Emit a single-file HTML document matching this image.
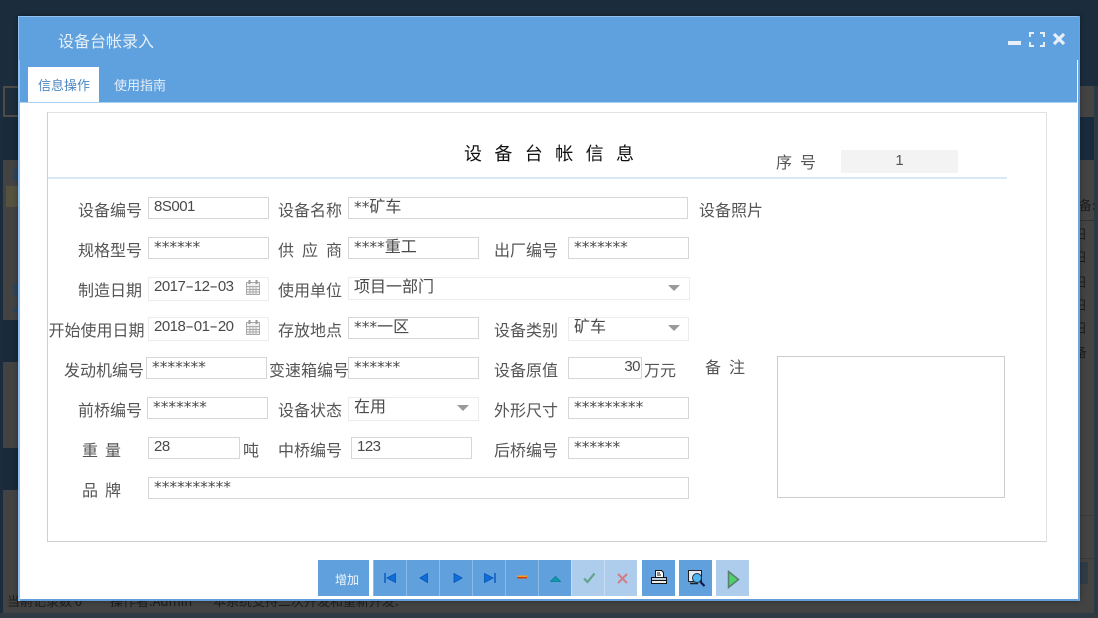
<!DOCTYPE html>
<html lang="zh"><head><meta charset="utf-8"><title>设备台帐录入</title>
<style>
html,body{margin:0;padding:0;width:1098px;height:618px;overflow:hidden;background:#434343}
body{position:relative;font-family:"Liberation Sans","WenQuanYi Zen Hei","Noto Sans CJK SC",sans-serif}
div,span{position:absolute;box-sizing:border-box}
svg{position:absolute;display:block}
.b{background:#1b2c3c}
.l{font:16px/20px "WenQuanYi Zen Hei","Noto Sans CJK SC",sans-serif;color:#555;white-space:nowrap;margin-top:-1px}
.j{text-align:justify;text-align-last:justify;white-space:normal}
.i{background:#fff;border:1px solid #d6d6d6;font:16px/14px "WenQuanYi Zen Hei","Noto Sans CJK SC",sans-serif;color:#4a4a4a;padding:0 0 0 5px;white-space:nowrap;overflow:hidden}
.s{border-color:#ececec}
.i b{font:400 15px/0 "Liberation Sans",sans-serif;letter-spacing:-.5px;position:relative;top:-1px}
.i b b{top:0}
.i b.h{display:inline-block;width:8.400px;text-align:center;transform:scaleX(1.700)}
.i em{font:400 15.400px/0 "DejaVu Sans",sans-serif;position:relative;top:-.5px}
.a{width:0;height:0;border-left:6px solid transparent;border-right:6px solid transparent;border-top:6px solid #9a9a9a}
.t{top:560px;height:36px;width:33px;background:#60a0dd;border-left:1px solid #8dbbe8}
.t.d{background:#aecdec;border-left-color:#c5dcf3}
.bg{color:#1d1d1d;font:13px/16px "WenQuanYi Zen Hei","Noto Sans CJK SC",sans-serif;white-space:nowrap}
</style></head><body>
<!-- backdrop -->
<div class="b" style="left:0;top:0;width:1098px;height:86px"></div>
<div class="b" style="left:0;top:86px;width:3px;height:532px"></div>
<div class="b" style="left:1094px;top:86px;width:4px;height:532px;background:#2b3945"></div>
<div class="b" style="left:3px;top:117px;width:1091px;height:43px;background:#182a3b"></div>
<div class="b" style="left:3px;top:320px;width:20px;height:42px;background:#182a3b"></div>
<div class="b" style="left:3px;top:448px;width:20px;height:42px;background:#182a3b"></div>
<div style="left:3px;top:86px;width:18px;height:31px;border:2px solid #4d4b46;background:#1e2d3b"></div>
<div style="left:6px;top:186px;width:14px;height:21px;background:#565240"></div>
<div style="left:13px;top:169px;width:8px;height:12px;background:#2c4560"></div>
<div style="left:13px;top:284px;width:8px;height:12px;background:#2c4560"></div>
<div style="left:13px;top:307px;width:8px;height:5px;background:#2c4560"></div>
<div style="left:1080px;top:562px;width:8px;height:22px;background:#2f3c48"></div>
<div style="left:1080px;top:515px;width:14px;height:1px;background:#3a3a3a"></div>
<div style="left:1080px;top:558px;width:14px;height:1px;background:#3a3a3a"></div>
<div style="left:1080px;top:220px;width:14px;height:1px;background:#333"></div>
<div class="bg" style="left:1066px;top:197px;font-size:13px">设备:</div>
<div class="bg" style="left:1074px;top:226px">日</div>
<div class="bg" style="left:1074px;top:249px">日</div>
<div class="bg" style="left:1074px;top:274px">日</div>
<div class="bg" style="left:1074px;top:297px">日</div>
<div class="bg" style="left:1074px;top:320px">日</div>
<div class="bg" style="left:1074px;top:344px">备</div>
<div class="bg" style="left:7px;top:593px">当前记录数 0</div>
<div class="bg" style="left:110px;top:593px">操作者:Admin</div>
<div class="bg" style="left:213px;top:593px">本系统支持二次开发和重新开发:</div>
<div style="left:0;top:613px;width:1098px;height:5px;background:#303a42"></div>

<!-- dialog -->
<div style="left:18px;top:16px;width:1062px;height:585px;background:#fff;border:2px solid #8fc0ef;border-top-width:1px;border-right-width:1px;border-bottom-width:1px;box-shadow:0 0 5px rgba(0,0,0,.35)"></div>
<div style="left:20px;top:599px;width:1060px;height:2px;background:#5f9fdc"></div>
<div style="left:1078px;top:16px;width:2px;height:585px;background:#68a5e0"></div>
<div style="left:19px;top:17px;width:1060px;height:43px;background:#5fa0de"></div>
<div style="left:20px;top:60px;width:1057px;height:42px;background:#5fa0de"></div>
<div style="left:20px;top:102px;width:1057px;height:1px;background:#a9d0f2"></div>
<div class="l" style="left:58px;top:31px;color:#e6eff8">设备台帐录入</div>
<svg style="left:1006px;top:30px" width="62" height="18" viewBox="0 0 62 18"><rect x="2" y="11" width="13" height="4" fill="#e6eff8"/><path d="M24 7V3h4M34 3h4v4M38 12v4h-4M28 16h-4v-4" fill="none" stroke="#e6eff8" stroke-width="2"/><path d="M48 4l10 10M58 4L48 14" fill="none" stroke="#e6eff8" stroke-width="3.2"/></svg>
<div style="left:28px;top:67px;width:71px;height:35px;background:#fff"></div>
<div class="l" style="left:38px;top:76px;font-size:13px;color:#4b87bf">信息操作</div>
<div class="l" style="left:114px;top:76px;font-size:13px;color:#e6eff8">使用指南</div>

<!-- panel -->
<div style="left:47px;top:112px;width:1000px;height:430px;border:1px solid #e2e2e2;border-left-color:#cfcfcf;border-bottom-color:#cfcfcf"></div>
<div style="left:48px;top:177px;width:959px;height:2px;background:#d8e8f7"></div>
<div class="l j" style="left:464px;top:143px;width:170px;font-size:18px;line-height:22px;color:#111">设 备 台 帐 信 息</div>
<div class="l j" style="left:776px;top:152px;width:40px">序 号</div>
<div style="left:841px;top:150px;width:117px;height:23px;background:#f3f3f3;color:#555;font:15px/21px 'Liberation Sans',sans-serif;text-align:center">1</div>

<!-- labels -->
<div class="l" style="left:78px;top:200px">设备编号</div>
<div class="l" style="left:78px;top:240px">规格型号</div>
<div class="l" style="left:78px;top:280px">制造日期</div>
<div class="l" style="left:48.500px;top:320px">开始使用日期</div>
<div class="l" style="left:64px;top:360px">发动机编号</div>
<div class="l" style="left:78px;top:400px">前桥编号</div>
<div class="l j" style="left:82px;top:440px;width:39px">重 量</div>
<div class="l j" style="left:82px;top:480px;width:39px">品 牌</div>
<div class="l" style="left:278px;top:200px">设备名称</div>
<div class="l j" style="left:278px;top:240px;width:64px">供 应 商</div>
<div class="l" style="left:278px;top:280px">使用单位</div>
<div class="l" style="left:278px;top:320px">存放地点</div>
<div class="l" style="left:269px;top:360px">变速箱编号</div>
<div class="l" style="left:278px;top:400px">设备状态</div>
<div class="l" style="left:278px;top:440px">中桥编号</div>
<div class="l" style="left:494px;top:240px">出厂编号</div>
<div class="l" style="left:494px;top:320px">设备类别</div>
<div class="l" style="left:494px;top:360px">设备原值</div>
<div class="l" style="left:494px;top:400px">外形尺寸</div>
<div class="l" style="left:494px;top:440px">后桥编号</div>
<div class="l" style="left:699px;top:200px">设备照片</div>
<div class="l j" style="left:705px;top:357px;width:40px">备 注</div>
<div class="l" style="left:644px;top:360px">万元</div>
<div class="l" style="left:243px;top:440px">吨</div>

<!-- inputs -->
<div class="i" style="left:148px;top:197px;width:121px;height:22px"><b>8S001</b></div>
<div class="i" style="left:148px;top:237px;width:121px;height:22px"><em>******</em></div>
<div class="i s" style="left:148px;top:277px;width:121px;height:24px"><b>2017<b class="h">-</b>12<b class="h">-</b>03</b></div>
<div class="i s" style="left:148px;top:317px;width:121px;height:24px"><b>2018<b class="h">-</b>01<b class="h">-</b>20</b></div>
<div class="i" style="left:146px;top:357px;width:121px;height:22px"><em>*******</em></div>
<div class="i" style="left:147px;top:397px;width:121px;height:22px"><em>*******</em></div>
<div class="i" style="left:148px;top:437px;width:92px;height:22px"><b>28</b></div>
<div class="i" style="left:148px;top:477px;width:541px;height:22px"><em>**********</em></div>
<div class="i" style="left:348px;top:197px;width:340px;height:22px"><em>**</em>矿车</div>
<div class="i" style="left:348px;top:237px;width:131px;height:22px"><em>****</em>重工</div>
<div class="i s" style="left:348px;top:277px;width:342px;height:23px">项目一部门</div>
<div class="i" style="left:348px;top:317px;width:131px;height:22px"><em>***</em>一区</div>
<div class="i" style="left:348px;top:357px;width:131px;height:22px"><em>******</em></div>
<div class="i s" style="left:348px;top:397px;width:131px;height:24px">在用</div>
<div class="i" style="left:351px;top:437px;width:121px;height:22px"><b>123</b></div>
<div class="i" style="left:568px;top:237px;width:121px;height:22px"><em>*******</em></div>
<div class="i s" style="left:568px;top:317px;width:121px;height:24px">矿车</div>
<div class="i" style="left:568px;top:357px;width:74px;height:22px;text-align:right;padding:0 1px 0 0"><b>30</b></div>
<div class="i" style="left:568px;top:397px;width:121px;height:22px"><em>*********</em></div>
<div class="i" style="left:568px;top:437px;width:121px;height:22px"><em>******</em></div>
<div style="left:777px;top:356px;width:228px;height:142px;border:1px solid #ccc"></div>

<div class="a" style="left:668px;top:285px"></div>
<div class="a" style="left:668px;top:325px"></div>
<div class="a" style="left:457px;top:405px"></div>
<svg style="left:245px;top:279px" width="16" height="17" viewBox="0 0 16 17"><path d="M1.500 3.500h13v12h-13zM1.500 7.500h13M1.500 10.500h13M1.500 13h13M5 7.500v8M8 7.500v8M11 7.500v8" fill="#f2f2f2" stroke="#aaa" stroke-width="1"/><path d="M4.500 1v4M11.500 1v4" stroke="#999" stroke-width="2"/></svg>
<svg style="left:245px;top:319px" width="16" height="17" viewBox="0 0 16 17"><path d="M1.500 3.500h13v12h-13zM1.500 7.500h13M1.500 10.500h13M1.500 13h13M5 7.500v8M8 7.500v8M11 7.500v8" fill="#f2f2f2" stroke="#aaa" stroke-width="1"/><path d="M4.500 1v4M11.500 1v4" stroke="#999" stroke-width="2"/></svg>

<!-- toolbar -->
<div style="left:318px;top:560px;width:51px;height:36px;background:#60a0dd;color:#eef5fc;font:12px/40px 'WenQuanYi Zen Hei','Noto Sans CJK SC',sans-serif;padding-left:17px">增加</div>
<div class="t" style="left:373px"><svg style="left:10px;top:10px" width="14" height="16" viewBox="0 0 14 16"><path d="M1 3v10" stroke="#0a5cc0" stroke-width="1.500"/><path d="M3 8l8.500-4.500v9z" fill="#0f6fdc" stroke="#0652b0" stroke-width=".8"/></svg></div>
<div class="t" style="left:406px"><svg style="left:12px;top:10px" width="12" height="16" viewBox="0 0 12 16"><path d="M1 8l7.500-4.500v9z" fill="#0f6fdc" stroke="#0652b0" stroke-width=".8"/></svg></div>
<div class="t" style="left:439px"><svg style="left:13px;top:10px" width="12" height="16" viewBox="0 0 12 16"><path d="M9 8L1 3.500v9z" fill="#0f6fdc" stroke="#0652b0" stroke-width=".8"/></svg></div>
<div class="t" style="left:472px"><svg style="left:11px;top:10px" width="14" height="16" viewBox="0 0 14 16"><path d="M11 3v10" stroke="#0a5cc0" stroke-width="1.500"/><path d="M9 8L.500 3.500v9z" fill="#0f6fdc" stroke="#0652b0" stroke-width=".8"/></svg></div>
<div class="t" style="left:505px"><svg style="left:11px;top:14px" width="12" height="6" viewBox="0 0 12 6"><rect width="10" height="1.500" y="1.500" fill="#f0a020"/><rect width="10" height="1.500" y="3" fill="#d83c0c"/></svg></div>
<div class="t" style="left:538px"><svg style="left:11px;top:15px" width="12" height="8" viewBox="0 0 12 8"><path d="M.500 6.500l5-5 5 5z" fill="#0d9bb0" stroke="#0a7d90" stroke-width=".8"/></svg></div>
<div class="t d" style="left:571px"><svg style="left:11px;top:11px" width="14" height="14" viewBox="0 0 14 14"><path d="M1 7.500l3.500 3.500 7-8.500" fill="none" stroke="#63a58c" stroke-width="2.200"/></svg></div>
<div class="t d" style="left:604px"><svg style="left:12px;top:13px" width="11" height="11" viewBox="0 0 11 11"><path d="M1 1l9 9M10 1l-9 9" stroke="#cf7f84" stroke-width="2"/></svg></div>
<div class="t" style="left:642px;border:0"><svg style="left:8px;top:9px" width="18" height="17" viewBox="0 0 18 17"><path d="M5.500 1.500h6l2 2v5h-8z" fill="#fff" stroke="#111"/><path d="M7 4h3M7 6h4" stroke="#111"/><path d="M1.500 8.500h15v3h-15z" fill="#bcd" stroke="#111"/><path d="M1.500 11.500h15v3h-15z" fill="#eee" stroke="#111"/></svg></div>
<div class="t" style="left:679px;border:0"><svg style="left:8px;top:9px" width="19" height="20" viewBox="0 0 19 20"><path d="M1.500 1.500h13v11h-13z" fill="#dfeaf5" stroke="#222"/><path d="M3 14.500h8" stroke="#222" stroke-width="1.500"/><circle cx="10" cy="9" r="4.500" fill="#4fb4f0" stroke="#234"/><path d="M13.500 13l4 4" stroke="#114" stroke-width="2"/></svg></div>
<div class="t d" style="left:716px;border:0"><svg style="left:11px;top:10px" width="14" height="19" viewBox="0 0 14 19"><path d="M1.500 1.500l10 8-10 8z" fill="#4fd06a" stroke="#5b7d70" stroke-width="1.500"/></svg></div>
</body></html>
